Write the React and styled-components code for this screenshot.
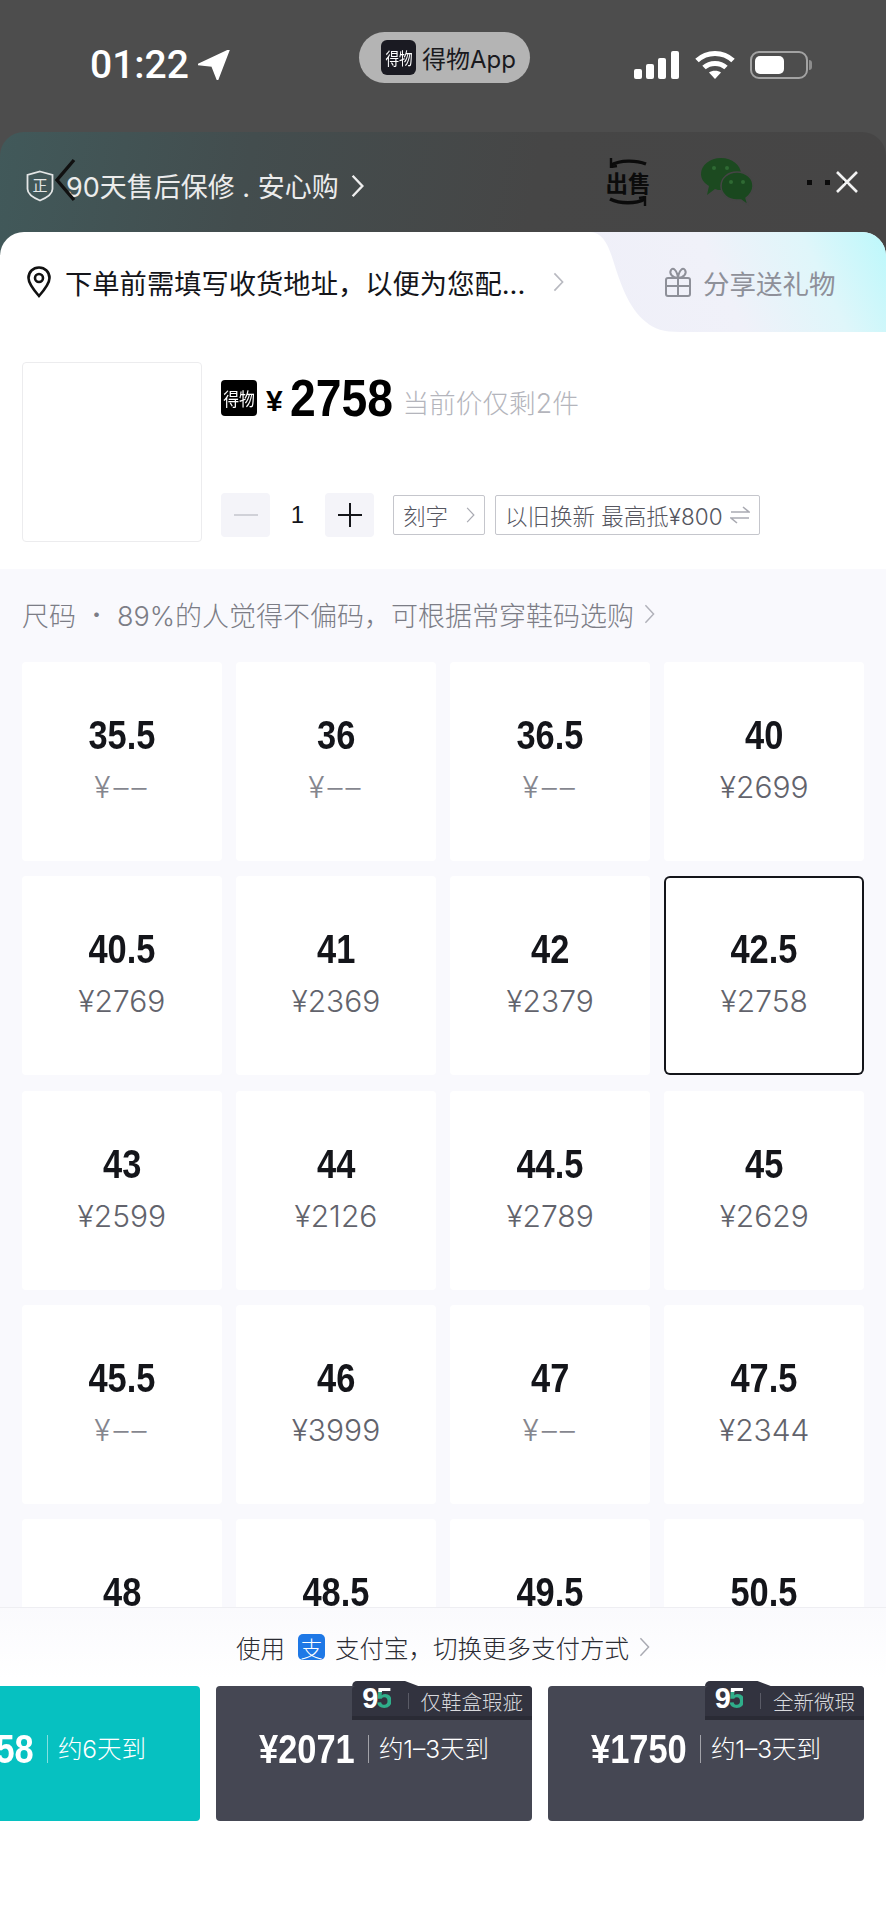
import styled, { createGlobalStyle } from "styled-components";

const GlobalStyle = createGlobalStyle`
    * { box-sizing: border-box; }
    html, body { margin: 0; padding: 0; background: #fff; }
    body { font-family: "Inter", "Noto Sans CJK SC", sans-serif; }
`

const BOLD = `"Liberation Sans", "Noto Sans CJK SC", sans-serif`
const CJK = `"Inter", "Noto Sans CJK SC", sans-serif`
const COMMA = "\uFF0C"

// the last row is cut by the footer, its prices never show
const SIZES = [
    ["35.5", null], ["36", null], ["36.5", null], ["40", "2699"],
    ["40.5", "2769"], ["41", "2369"], ["42", "2379"], ["42.5", "2758"],
    ["43", "2599"], ["44", "2126"], ["44.5", "2789"], ["45", "2629"],
    ["45.5", null], ["46", "3999"], ["47", null], ["47.5", "2344"],
    ["48"], ["48.5"], ["49.5"], ["50.5"],
]

const BUYS = [
    { price: "¥2758", days: "约6天到", teal: true },
    { price: "¥2071", days: "约1–3天到", badge: "仅鞋盒瑕疵" },
    { price: "¥1750", days: "约1–3天到", badge: "全新微瑕" },
]

function Chevron({ w = 12, h = 22, color = "currentColor", sw = 2 }) {
    return (
        <svg width={w} height={h} viewBox="0 0 12 22" fill="none">
            <path d="M1.5 1.5 L10.5 11 L1.5 20.5" stroke={color} strokeWidth={sw} />
        </svg>
    )
}

export default function App() {
    return (
        <Page>
            <GlobalStyle />
            <StatusBar>
                <TimeBox>
                    <Time>01:22</Time>
                    <svg width="32" height="30" viewBox="0 0 32 30">
                        <path d="M31 0 L0 14.5 L14 16 L19.5 30 Z" fill="#fff" stroke="#fff" strokeWidth="1.5" strokeLinejoin="round" />
                    </svg>
                </TimeBox>
                <AppPill>
                    <AppLogo><span>得物</span></AppLogo>
                    得物App
                </AppPill>
                <StatusIcons>
                    <svg width="46" height="28" viewBox="0 0 46 28" fill="#fff">
                        <rect x="0" y="18" width="8" height="10" rx="2" />
                        <rect x="12" y="13" width="8" height="15" rx="2" />
                        <rect x="24" y="7" width="8" height="21" rx="2" />
                        <rect x="37" y="0" width="8" height="28" rx="2" />
                    </svg>
                    <svg width="40" height="30" viewBox="0 0 40 30" fill="none" stroke="#fff" strokeWidth="5">
                        <path d="M2 10.5 C12 1 28 1 38 10.5" />
                        <path d="M9 17.5 C15 12 25 12 31 17.5" />
                        <path d="M20 29 L14 22.5 C17 20 23 20 26 22.5 Z" fill="#fff" strokeWidth="0" />
                    </svg>
                    <Battery><BatteryFill /></Battery>
                </StatusIcons>
            </StatusBar>

            <TopBar>
                <Guarantee>
                    <svg width="28" height="32" viewBox="0 0 28 32" fill="none">
                        <path d="M14 1.5 L26.5 5 V19 C26.5 24 20 28 14 30.5 C8 28 1.5 24 1.5 19 V5 Z" stroke="#e4e6e6" strokeWidth="1.8" />
                        <text x="14" y="21" fontSize="15" textAnchor="middle" fill="#e4e6e6" fontFamily="Noto Sans CJK SC">正</text>
                    </svg>
                    <GuaranteeText>90天售后保修 . 安心购</GuaranteeText>
                    <Chevron w={13} h={24} color="#eee" sw={2.2} />
                    <BackArrow>
                        <svg width="22" height="44" viewBox="0 0 22 44" fill="none">
                            <path d="M20 2 L3 22 L20 42" stroke="#111" strokeWidth="3.4" />
                        </svg>
                    </BackArrow>
                </Guarantee>
                <TopActions>
                    <SellIcon>
                        <svg width="44" height="11" viewBox="0 0 44 11" fill="none" stroke="#0b0b0b" strokeWidth="3.4">
                            <path d="M5 8 C14 3 30 3 40 7" />
                            <path d="M5 1 V10 L11 9" strokeWidth="2.4" />
                        </svg>
                        <SellText>出售</SellText>
                        <svg width="44" height="11" viewBox="0 0 44 11" fill="none" stroke="#0b0b0b" strokeWidth="3.4">
                            <path d="M4 3 C14 8 30 8 39 3" />
                            <path d="M39 10 V1 L33 2" strokeWidth="2.4" />
                        </svg>
                    </SellIcon>
                    <svg width="54" height="48" viewBox="0 0 54 48">
                        <path d="M21 0 C32 0 41 7 41 16 C41 25 32 32 21 32 C19 32 17 32 15 31 L7 37 L9 28 C4 25 1 21 1 16 C1 7 10 0 21 0 Z" fill="#1c4a20" />
                        <path d="M37 14 C46 14 53 20 53 28 C53 33 50 37 46 40 L48 47 L41 42 C39 42 38 42 37 42 C28 42 21 36 21 28 C21 20 28 14 37 14 Z" fill="#1a481f" stroke="#454545" strokeWidth="1.5" />
                        <circle cx="14" cy="10" r="2" fill="#2f6a33" /><circle cx="27" cy="10" r="2" fill="#2f6a33" />
                        <circle cx="31" cy="24" r="2" fill="#2f6a33" /><circle cx="43" cy="24" r="2" fill="#2f6a33" />
                    </svg>
                    <MoreClose>
                        <Dot /><Dot /><Dot />
                        <CloseX>
                            <svg width="24" height="24" viewBox="0 0 24 24" stroke="#f2f2f2" strokeWidth="2.6">
                                <path d="M2 2 L22 22 M22 2 L2 22" />
                            </svg>
                        </CloseX>
                    </MoreClose>
                </TopActions>
            </TopBar>

            <Sheet>
                <AddressRow>
                    <Address>
                        <svg width="24" height="32" viewBox="0 0 24 32" fill="none" stroke="#111" strokeWidth="2.6">
                            <path d="M12 30 C5 22 1.5 17 1.5 12 C1.5 6 6 1.5 12 1.5 C18 1.5 22.5 6 22.5 12 C22.5 17 19 22 12 30 Z" />
                            <circle cx="12" cy="12" r="4" />
                        </svg>
                        <AddressText>下单前需填写收货地址{COMMA}以便为您配...</AddressText>
                        <Chevron w={11} h={20} color="#b8b9c0" sw={1.8} />
                    </Address>
                    <ShareTab>
                        <svg width="28" height="30" viewBox="0 0 28 30" fill="none" stroke="#8e9099" strokeWidth="2">
                            <rect x="2" y="11" width="24" height="18" rx="2" />
                            <path d="M14 11 V29 M2 19 H26" />
                            <path d="M14 11 C8 11 5 6 7 3 C9 0 13 3 14 11 C15 3 19 0 21 3 C23 6 20 11 14 11 Z" />
                        </svg>
                        分享送礼物
                    </ShareTab>
                </AddressRow>

                <Product>
                    <Thumb />
                    <ProductInfo>
                        <PriceRow>
                            <DewuLogo><span>得物</span></DewuLogo>
                            <Yuan>¥</Yuan>
                            <BigPrice>2758</BigPrice>
                            <PriceNote>当前价仅剩2件</PriceNote>
                        </PriceRow>
                        <ControlRow>
                            <StepButton>
                                <svg width="24" height="24" viewBox="0 0 24 24"><path d="M0 12 H24" stroke="#d0d1d8" strokeWidth="2" /></svg>
                            </StepButton>
                            <Quantity>1</Quantity>
                            <StepButton>
                                <svg width="24" height="24" viewBox="0 0 24 24"><path d="M0 12 H24 M12 0 V24" stroke="#14151a" strokeWidth="2" /></svg>
                            </StepButton>
                            <Tag>
                                刻字
                                <Chevron w={9} h={18} color="#a9aab2" sw={1.6} />
                            </Tag>
                            <Tag $tight>
                                以旧换新 最高抵¥800
                                <svg width="20" height="18" viewBox="0 0 20 18" fill="none" stroke="#a9aab2" strokeWidth="1.6">
                                    <path d="M1 6 H19 L13 1" />
                                    <path d="M19 12 H1 L7 17" />
                                </svg>
                            </Tag>
                        </ControlRow>
                    </ProductInfo>
                </Product>

                <SizeSection>
                    <SizeHint>
                        尺码<HintDot>·</HintDot>89%的人觉得不偏码{COMMA}可根据常穿鞋码选购
                        <Chevron w={11} h={20} color="#b0b1b9" sw={1.6} />
                    </SizeHint>
                    <SizeGrid>
                        {SIZES.map(([size, price]) => (
                            <SizeCell key={size} $selected={size === "42.5"}>
                                <SizeNumber>{size}</SizeNumber>
                                {price !== undefined && (
                                    <SizePrice $empty={!price}>¥{price || "––"}</SizePrice>
                                )}
                            </SizeCell>
                        ))}
                    </SizeGrid>
                </SizeSection>

                <Footer>
                    <PayRow>
                        使用
                        <AlipayIcon>支</AlipayIcon>
                        支付宝{COMMA}切换更多支付方式
                        <Chevron w={11} h={20} color="#a9aab2" sw={1.6} />
                    </PayRow>
                    <BuyRow>
                        {BUYS.map((b) => (
                            <BuyButton key={b.price} $teal={b.teal}>
                                {b.badge && (
                                    <Badge>
                                        <NineFive>9<Five>5</Five></NineFive>
                                        <BadgeLine />
                                        {b.badge}
                                    </Badge>
                                )}
                                <BuyPrice>{b.price}</BuyPrice>
                                <BuyLine />
                                <BuyDays>{b.days}</BuyDays>
                            </BuyButton>
                        ))}
                    </BuyRow>
                </Footer>
            </Sheet>
        </Page>
    )
}

const Page = styled.div`
    width: 886px;
    height: 1920px;
    overflow: hidden;
    display: flex;
    flex-direction: column;
    background-color: #4d4d4d;
`
const StatusBar = styled.div`
    height: 132px;
    flex-shrink: 0;
    display: grid;
    grid-template-columns: 1fr auto 1fr;
    padding: 32px 78px 0 90px;
`
const TimeBox = styled.div`
    height: 66px;
    display: flex;
    align-items: center;
    gap: 9px;
`
const Time = styled.span`
    font-family: "Roboto", sans-serif;
    font-weight: 500;
    font-size: 39px;
    color: #fff;
`
const AppPill = styled.div`
    width: 171px;
    height: 51px;
    margin-left: -9px;
    border-radius: 26px;
    background-color: #b4b4b4;
    display: flex;
    align-items: center;
    gap: 6px;
    padding-left: 22px;
    font-family: ${CJK};
    font-size: 24px;
    color: #1a1a1e;
    white-space: nowrap;
`
const AppLogo = styled.div`
    width: 35px;
    height: 35px;
    border-radius: 6px;
    background-color: #1a1a22;
    color: #fff;
    font-family: "Noto Sans CJK SC", sans-serif;
    font-size: 17px;
    display: flex;
    align-items: center;
    justify-content: center;
    flex-shrink: 0;
    white-space: nowrap;
    span { display: block; transform: scaleX(0.8); }
`
const StatusIcons = styled.div`
    height: 66px;
    display: flex;
    align-items: center;
    justify-content: flex-end;
    gap: 15px;
`
const Battery = styled.div`
    width: 58px;
    height: 28px;
    border: 2px solid #a3a3a3;
    border-radius: 9px;
    padding: 3px;
    position: relative;
    &::after {
        content: "";
        position: absolute;
        right: -6px;
        top: 7px;
        width: 3px;
        height: 10px;
        border-radius: 0 3px 3px 0;
        background-color: #8d8d8d;
    }
`
const BatteryFill = styled.div`
    width: 29px;
    height: 100%;
    border-radius: 5px;
    background-color: #fff;
`
const TopBar = styled.div`
    height: 124px;
    flex-shrink: 0;
    padding: 0 28px 24px 26px;
    border-radius: 24px 24px 0 0;
    background: linear-gradient(100deg, #41595a 0%, #434d4e 28%, #464646 60%, #464545 100%);
    display: flex;
    align-items: center;
    justify-content: space-between;
`
const Guarantee = styled.div`
    position: relative;
    display: flex;
    align-items: center;
    margin-top: 7px;
`
const GuaranteeText = styled.span`
    font-family: ${CJK};
    font-weight: 400;
    font-size: 27px;
    color: #ececec;
    margin: 0 12px 0 12px;
    white-space: nowrap;
`
const BackArrow = styled.div`
    position: absolute;
    left: 28px;
    top: -8px;
`
const TopActions = styled.div`
    display: flex;
    align-items: center;
`
const SellIcon = styled.div`
    width: 46px;
    display: flex;
    flex-direction: column;
    align-items: center;
    margin-right: 49px;
`
const SellText = styled.span`
    font-family: "Noto Sans CJK SC", sans-serif;
    font-weight: 700;
    font-size: 22.5px;
    line-height: 28px;
    color: #0b0b0b;
    white-space: nowrap;
`
const MoreClose = styled.div`
    position: relative;
    display: flex;
    gap: 13px;
    margin-left: 53px;
    margin-right: 10px;
`
const Dot = styled.div`
    width: 5px;
    height: 5px;
    background-color: #0b0b0b;
`
const CloseX = styled.div`
    position: absolute;
    left: 28px;
    top: -10px;
    line-height: 0;
`
const Sheet = styled.div`
    flex: 1;
    min-height: 0;
    margin-top: -24px;
    position: relative;
    display: flex;
    flex-direction: column;
    background-color: #fff;
    border-radius: 24px 24px 0 0;
    overflow: hidden;
`
const AddressRow = styled.div`
    height: 100px;
    flex-shrink: 0;
    display: flex;
`
const Address = styled.div`
    flex: 1;
    display: flex;
    align-items: center;
    padding-left: 27px;
`
const AddressText = styled.span`
    font-family: ${CJK};
    font-size: 27.3px;
    color: #14151a;
    margin: 0 28px 0 14px;
    white-space: nowrap;
`
const ShareTab = styled.div`
    width: 296px;
    flex-shrink: 0;
    display: flex;
    align-items: center;
    gap: 11px;
    padding-left: 74px;
    font-family: ${CJK};
    font-size: 26.5px;
    color: #8e9099;
    white-space: nowrap;
    background: linear-gradient(65deg, #efeff8 0%, #f0f1f9 45%, #dff6fa 75%, #bcf8fb 100%);
    clip-path: path("M0 0 C12 0 18 12 23 28 C30 50 38 76 56 90 C64 97 74 100 90 100 L296 100 L296 0 Z");
`
const Product = styled.div`
    height: 237px;
    flex-shrink: 0;
    display: flex;
    gap: 19px;
    padding: 30px 0 0 22px;
`
const Thumb = styled.div`
    width: 180px;
    height: 180px;
    border: 1px solid #ececee;
    border-radius: 4px;
`
const ProductInfo = styled.div`
    display: flex;
    flex-direction: column;
`
const PriceRow = styled.div`
    height: 54px;
    display: flex;
    align-items: center;
    margin-top: 9px;
`
const DewuLogo = styled.div`
    width: 36px;
    height: 36px;
    border-radius: 4px;
    background-color: #000;
    color: #fff;
    font-family: "Noto Sans CJK SC", sans-serif;
    font-size: 18px;
    display: flex;
    align-items: center;
    justify-content: center;
    white-space: nowrap;
    span { display: block; transform: scaleX(0.88); }
`
const Yuan = styled.span`
    font-family: ${BOLD};
    font-weight: 700;
    font-size: 30px;
    color: #000;
    margin: 6px 7px 0 9px;
`
const BigPrice = styled.span`
    display: inline-block;
    font-family: ${BOLD};
    font-weight: 700;
    font-size: 52px;
    color: #000;
    transform: scaleX(0.89);
    transform-origin: left center;
    margin-right: -13px;
`
const PriceNote = styled.span`
    font-family: ${CJK};
    font-weight: 300;
    font-size: 26.7px;
    color: #b4b5bc;
    margin: 6px 0 0 10px;
    white-space: nowrap;
`
const ControlRow = styled.div`
    display: flex;
    align-items: center;
    margin-top: 68px;
`
const StepButton = styled.div`
    width: 49px;
    height: 44px;
    border-radius: 4px;
    background-color: #f4f4f9;
    display: flex;
    align-items: center;
    justify-content: center;
`
const Quantity = styled.div`
    width: 55px;
    text-align: center;
    font-family: "Liberation Sans", sans-serif;
    font-size: 24px;
    color: #14151a;
`
const Tag = styled.div`
    height: 40px;
    margin-left: ${(p) => (p.$tight ? "10px" : "19px")};
    padding: 0 9px;
    border: 1.5px solid #c5c6cc;
    border-radius: 2px;
    display: flex;
    align-items: center;
    gap: ${(p) => (p.$tight ? "7px" : "18px")};
    font-family: ${CJK};
    font-weight: 300;
    font-size: 22.5px;
    color: #55565f;
    white-space: nowrap;
`
const SizeSection = styled.div`
    height: 1038px;
    flex-shrink: 0;
    overflow: hidden;
    padding: 0 22px;
    background-color: #f9f9fd;
`
const SizeHint = styled.div`
    height: 93px;
    padding-bottom: 3px;
    display: flex;
    align-items: center;
    font-family: ${CJK};
    font-weight: 300;
    font-size: 27px;
    color: #7c7d86;
    white-space: nowrap;
    svg { margin-left: 10px; }
`
const HintDot = styled.span`
    width: 41px;
    text-align: center;
    font-weight: 700;
`
const SizeGrid = styled.div`
    display: grid;
    grid-template-columns: repeat(4, 1fr);
    grid-auto-rows: 199px;
    gap: 15.3px 14.6px;
`
const SizeCell = styled.div`
    background-color: #fff;
    border-radius: ${(p) => (p.$selected ? "6px" : "4px")};
    box-shadow: ${(p) => (p.$selected ? "inset 0 0 0 2px #14151a" : "none")};
    padding-top: 47px;
    display: flex;
    flex-direction: column;
    align-items: center;
`
const SizeNumber = styled.div`
    font-family: ${BOLD};
    font-weight: 700;
    font-size: 40px;
    line-height: 52px;
    color: #14151a;
    transform: scaleX(0.86);
`
const SizePrice = styled.div`
    font-family: "Inter", sans-serif;
    font-weight: 300;
    font-size: 30px;
    line-height: 52px;
    letter-spacing: ${(p) => (p.$empty ? "3px" : "0")};
    color: ${(p) => (p.$empty ? "#85868e" : "#62636c")};
`
const Footer = styled.div`
    flex: 1;
    border-top: 1px solid #eeeef2;
    background: linear-gradient(180deg, #fafafd 0, #fff 70px);
`
const PayRow = styled.div`
    height: 78px;
    display: flex;
    align-items: center;
    justify-content: center;
    font-family: ${CJK};
    font-weight: 300;
    font-size: 24.5px;
    color: #2b2c33;
    white-space: nowrap;
    svg { margin-left: 10px; }
`
const AlipayIcon = styled.div`
    width: 27px;
    height: 26px;
    margin: 0 10px 0 13px;
    border-radius: 5px;
    background-color: #1e78e6;
    color: #fff;
    font-family: "Noto Sans CJK SC", sans-serif;
    font-size: 22px;
    line-height: 26px;
    text-align: center;
`
const BuyRow = styled.div`
    display: flex;
    justify-content: flex-end;
    gap: 16px;
    padding-right: 22px;
`
const BuyButton = styled.div`
    position: relative;
    width: 316px;
    height: 135px;
    flex-shrink: 0;
    border-radius: 4px;
    background-color: ${(p) => (p.$teal ? "#06c1c1" : "#454753")};
    color: #fff;
    display: flex;
    justify-content: center;
    align-items: flex-start;
    padding-top: 38px;
`
const BuyPrice = styled.span`
    display: inline-block;
    font-family: ${BOLD};
    font-weight: 700;
    font-size: 41px;
    line-height: 50px;
    transform: scaleX(0.84);
    transform-origin: left center;
    margin-right: -18px;
`
const BuyLine = styled.div`
    width: 1px;
    height: 28px;
    margin: 11px 10px 0 13px;
    background-color: rgba(255, 255, 255, 0.5);
`
const BuyDays = styled.span`
    font-family: ${CJK};
    font-weight: 300;
    font-size: 24.5px;
    line-height: 50px;
`
const Badge = styled.div`
    position: absolute;
    top: 0;
    right: 0;
    height: 34px;
    display: flex;
    align-items: center;
    padding: 0 9px 4px 10px;
    border-radius: 4px 4px 0 0;
    background-color: #32333f;
    box-shadow: inset 0 -4px 0 #2a2b35;
    font-family: ${CJK};
    font-weight: 300;
    font-size: 20.5px;
    color: #d8d9dd;
    white-space: nowrap;
    &::before {
        content: "";
        position: absolute;
        left: 0;
        top: -5px;
        width: 66px;
        height: 5px;
        background-color: #32333f;
        border-radius: 5px 0 0 0;
        clip-path: polygon(0 0, 80% 0, 100% 100%, 0 100%);
    }
`
const NineFive = styled.div`
    font-family: ${BOLD};
    font-weight: 700;
    font-size: 29px;
    line-height: 28px;
    letter-spacing: -2px;
    color: #fff;
    margin-top: -6px;
`
const Five = styled.span`
    background: linear-gradient(180deg, #fff 32%, #2fae8a 32%);
    -webkit-background-clip: text;
    background-clip: text;
    color: transparent;
`
const BadgeLine = styled.div`
    width: 1px;
    height: 16px;
    margin: 0 12px 0 17px;
    background-color: #5a5b66;
`
